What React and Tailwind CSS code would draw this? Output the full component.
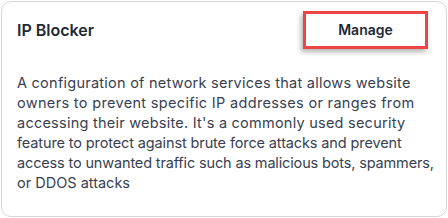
export default function App() {
  return (
    <div className="w-[448px] h-[218px] bg-white p-px" style={{ fontFamily: "Inter, 'Noto Sans', sans-serif" }}>
      <div className="h-[216px] w-[446px] rounded-[10px] border border-[#d4d6da] bg-white pl-[15px] pr-[4px] pt-[9px]">
        <div className="flex items-center justify-between pr-[14px]">
          <h3 className="text-base font-semibold text-[#1f2937]">IP Blocker</h3>
          <button className="h-[38px] w-[125px] border-[3px] border-[#ef4444] bg-white text-sm font-semibold text-[#1f2937] shadow-[-2px_3px_5px_rgba(0,0,0,0.3)]">
            Manage
          </button>
        </div>
        <p className="mt-[24px] whitespace-nowrap text-[14.5px] leading-5 text-[#374151]">
          <span className="block tracking-[0.25px]">A configuration of network services that allows website</span>
          <span className="block tracking-[0.33px]">owners to prevent specific IP addresses or ranges from</span>
          <span className="block tracking-[0.24px]">accessing their website. It's a commonly used security</span>
          <span className="block tracking-[-0.12px]">feature to protect against brute force attacks and prevent</span>
          <span className="block tracking-[-0.15px]">access to unwanted traffic such as malicious bots, spammers,</span>
          <span className="block">or DDOS attacks</span>
        </p>
      </div>
    </div>
  );
}
